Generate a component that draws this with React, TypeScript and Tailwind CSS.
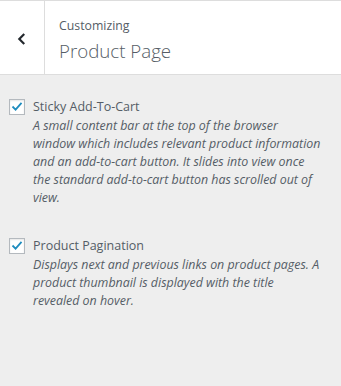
import React from 'react';

interface OptionProps {
  label: string;
  lines: string[];
}

const font = { fontFamily: '"Segoe UI", "Open Sans", "Noto Sans", sans-serif' };

const CheckOption: React.FC<OptionProps> = ({ label, lines }) => (
  <label className="flex items-start gap-[8px] cursor-pointer">
    <span className="mt-[2px] flex h-[16px] w-[16px] shrink-0 items-center justify-center border border-[#b4b9be] bg-white shadow-[inset_0_1px_2px_rgba(0,0,0,0.1)]">
      <svg viewBox="0 0 20 20" className="h-[16px] w-[16px]">
        <path d="M4.5 10.2 L8 13.7 L15.6 5.2" fill="none" stroke="#1e8cbe" strokeWidth="2.6" strokeLinecap="square" />
      </svg>
    </span>
    <span className="flex flex-col">
      <span className="text-[12.5px] leading-[20px] text-[#555d66]">{label}</span>
      <span className="flex flex-col text-[12.4px] italic leading-[18px] text-[#555d66]">
        {lines.map((line) => (
          <span key={line} className="whitespace-nowrap">{line}</span>
        ))}
      </span>
    </span>
  </label>
);

export default function App() {
  return (
    <div className="h-[386px] w-[341px] overflow-hidden bg-[#eeeeee]" style={font}>
      {/* Header */}
      <div className="flex h-[75px] border-y border-[#dddddd] bg-white">
        <button className="flex w-[45px] items-center justify-center border-r border-[#dddddd] pt-[2px] text-[#23282d]">
          <svg viewBox="0 0 20 20" className="h-[18px] w-[18px]">
            <path d="M12.5 4.5 L7 10 L12.5 15.5" fill="none" stroke="currentColor" strokeWidth="2.4" />
          </svg>
        </button>
        <div className="flex flex-col pl-[14px] pt-[16px]">
          <span className="text-[12.3px] leading-[18px] text-[#555d66]">Customizing</span>
          <span className="mt-[3px] text-[18.7px] font-light leading-[26px] text-[#555d66]">Product Page</span>
        </div>
      </div>

      {/* Controls */}
      <div className="flex flex-col gap-[29px] px-[9px] pt-[22px]">
        <CheckOption
          label="Sticky Add-To-Cart"
          lines={[
            'A small content bar at the top of the browser',
            'window which includes relevant product information',
            'and an add-to-cart button. It slides into view once',
            'the standard add-to-cart button has scrolled out of',
            'view.',
          ]}
        />
        <CheckOption
          label="Product Pagination"
          lines={[
            'Displays next and previous links on product pages. A',
            'product thumbnail is displayed with the title',
            'revealed on hover.',
          ]}
        />
      </div>
    </div>
  );
}
